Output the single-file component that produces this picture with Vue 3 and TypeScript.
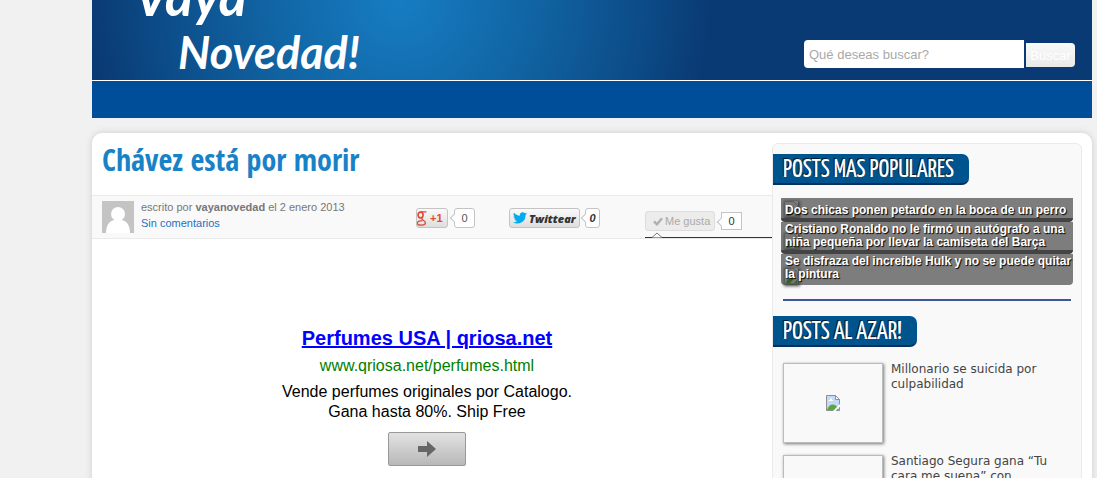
<script setup lang="ts">
import { ref } from 'vue'

interface Post {
  title: string
}

const query = ref('')

const popular: Post[] = [
  { title: 'Dos chicas ponen petardo en la boca de un perro' },
  { title: 'Cristiano Ronaldo no le firmó un autógrafo a una niña pequeña por llevar la camiseta del Barça' },
  { title: 'Se disfraza del increíble Hulk y no se puede quitar la pintura' },
]

const random: Post[] = [
  { title: 'Millonario se suicida por culpabilidad' },
  { title: 'Santiago Segura gana “Tu cara me suena” con' },
]
</script>

<template>
  <div class="page">
    <header class="banner">
      <a class="logo" href="#"><span class="logo-first">Vaya</span><span class="logo-second">Novedad!</span></a>
      <form class="search" @submit.prevent>
        <input v-model="query" type="text" aria-label="Buscar en el sitio" placeholder="Qué deseas buscar?" />
        <button type="submit">Buscar</button>
      </form>
    </header>
    <nav class="menu" aria-label="Principal"></nav>

    <div class="content">
      <main class="article">
        <h1>Chávez está por morir</h1>
        <div class="meta">
          <svg class="avatar" viewBox="0 0 32 32" aria-hidden="true">
            <rect width="32" height="32" fill="#c4c4c4" />
            <circle cx="16" cy="13" r="7" fill="#fff" />
            <path d="M4 32C4 24 8 19 13 19H19C24 19 28 24 28 32Z" fill="#fff" />
          </svg>
          <div class="byline">
            <div>escrito por <b>vayanovedad</b> el 2 enero 2013</div>
            <a href="#">Sin comentarios</a>
          </div>
          <div class="social google">
            <button type="button" class="plus">
              <svg width="10" height="16" viewBox="0 0 10 16" aria-hidden="true">
                <ellipse cx="3.600" cy="5" rx="2.500" ry="2.900" fill="none" stroke="#dd4b39" stroke-width="1.600" />
                <path d="M3.500 1.800H9.500M5.200 8C4.500 8.800 5 9.300 6.300 10.200 8.200 11.400 8.700 12.400 8.300 13.500 7.800 14.800 6 15.200 3.800 15.200 1.500 15.200.2 14.400.4 13 .6 11.400 2.500 10.600 5.400 10.600" fill="none" stroke="#dd4b39" stroke-width="1.300" />
              </svg>
              <span>+1</span>
            </button>
            <span class="count">0</span>
          </div>
          <div class="social twitter">
            <button type="button" class="tweet">
              <svg width="14" height="12" viewBox="0 0 24 20" aria-hidden="true">
                <path fill="#00aced" d="M24 2.400c-.9.400-1.800.7-2.800.8 1-.6 1.800-1.600 2.200-2.700-1 .6-2 1-3.100 1.200A4.900 4.900 0 0 0 11.900 6.100C7.800 5.900 4.200 4 1.700 1A4.900 4.900 0 0 0 3.200 7.500c-.8 0-1.600-.2-2.200-.6v.1c0 2.400 1.700 4.400 3.900 4.800-.7.200-1.500.2-2.200.1.600 2 2.400 3.400 4.600 3.400A9.900 9.900 0 0 1 0 17.300 14 14 0 0 0 21.500 5.500v-.6c1-.7 1.800-1.500 2.500-2.500z" />
              </svg>
              <span>Twittear</span>
            </button>
            <span class="count strong">0</span>
          </div>
          <div class="facebook">
            <div class="social">
              <button type="button" class="like">
                <svg width="10" height="9" viewBox="0 0 10 9" aria-hidden="true">
                  <path d="M1 4.500 4 7.300 9 1.200" fill="none" stroke="#b0b0b0" stroke-width="2.400" />
                </svg>
                <span>Me gusta</span>
              </button>
              <span class="count square">0</span>
            </div>
            <svg class="caret" width="12" height="6" viewBox="0 0 12 6" aria-hidden="true">
              <path d="M1 5.500 6 1 11 5.500" fill="#fff" stroke="#777" />
            </svg>
          </div>
        </div>

        <section class="advert">
          <a class="advert-title" href="#">Perfumes USA | qriosa.net</a>
          <a class="advert-url" href="#">www.qriosa.net/perfumes.html</a>
          <p>Vende perfumes originales por Catalogo.<br />Gana hasta 80%. Ship Free</p>
          <button type="button" class="go" aria-label="Visitar">
            <svg width="18" height="16" viewBox="0 0 18 16" aria-hidden="true">
              <path d="M0 5H9V0L18 8 9 16V11H0Z" fill="#666" />
            </svg>
          </button>
        </section>
      </main>

      <aside class="sidebar">
        <h2>POSTS MAS POPULARES</h2>
        <ul class="popular">
          <li v-for="post in popular" :key="post.title">
            <svg class="missing" width="14" height="16" viewBox="0 0 14 16" aria-hidden="true">
              <path d="M.5.500H9.500L13.500 4.500V15.500H.5Z" fill="#777" stroke="#5c5c5c" />
              <path d="M2 15C4 9 8 9 10 11L6 15ZM10 15 13 12V15Z" fill="#31651f" />
            </svg>
            <a href="#">{{ post.title }}</a>
          </li>
        </ul>
        <hr />
        <h2>POSTS AL AZAR!</h2>
        <ul class="random">
          <li v-for="post in random" :key="post.title">
            <a class="thumb" href="#" :aria-label="post.title">
              <svg width="14" height="16" viewBox="0 0 14 16" aria-hidden="true">
                <path d="M.5.500H9.500L13.500 4.500V15.500H.5Z" fill="#c5d8f7" stroke="#909090" />
                <path d="M9.500.500V4.500H13.500Z" fill="#fff" stroke="#909090" />
                <path d="M2.500 6V5H4V3.500H6V5H7V6Z" fill="#fff" />
                <path d="M1 15C3 9 8 8 11 12L13 15Z" fill="#56aa3c" />
                <path d="M7 16 14 9V11.500L9.500 16Z" fill="#fff" />
              </svg>
            </a>
            <a class="random-title" href="#">{{ post.title }}</a>
          </li>
        </ul>
      </aside>
    </div>
  </div>
</template>

<style>
html,
body {
  background: #f1f1f1;
}
body {
  margin: 0;
  overflow: hidden;
}
</style>

<style scoped>
.page {
  box-sizing: border-box;
  height: 100vh;
  overflow: hidden;
  padding: 0 5px 0 92px;
  font-family: "Liberation Sans", Arial, sans-serif;
}
a {
  text-decoration: none;
}
button {
  font-family: inherit;
  cursor: pointer;
}
svg {
  flex: none;
}
.banner {
  box-sizing: border-box;
  height: 80px;
  display: flex;
  align-items: flex-end;
  justify-content: space-between;
  overflow: hidden;
  padding: 0 17px 0 42px;
  background: radial-gradient(circle 310px at 308px 0, #167dc3 0%, #1166a5 40%, #0c4c88 78%, #0a3a73 100%);
}
.logo {
  display: flex;
  flex-direction: column;
  color: #fff;
  font: italic 700 45px/56px Lato, sans-serif;
}
.logo-first {
  font-size: 54px;
}
.logo-second {
  margin-left: 44px;
}
.search {
  display: flex;
  align-items: center;
  gap: 2px;
  margin-bottom: 12px;
}
.search input {
  box-sizing: border-box;
  width: 220px;
  height: 28px;
  padding: 0 5px;
  border: 0;
  border-radius: 4px 0 0 4px;
  background: #fff;
  font: 13px "Liberation Sans", Arial, sans-serif;
}
.search input::placeholder {
  color: #a9a9a9;
}
.search button {
  width: 49px;
  height: 24px;
  padding: 0;
  margin-top: 2px;
  border: 0;
  border-radius: 0 4px 4px 0;
  background: linear-gradient(#fafafa, #e9e9e9);
  color: #fff;
  font-size: 13px;
}
.menu {
  height: 37px;
  border-top: 1px solid #fff;
  background: #004d99;
}
.content {
  display: flex;
  align-items: flex-start;
  min-height: 400px;
  margin-top: 15px;
  border-radius: 10px;
  background: #fff;
  box-shadow: 0 0 7px #ccc;
}
.article {
  flex: 1;
  min-width: 0;
}
h1 {
  margin: 0;
  padding: 8px 10px 16px;
  color: #1982c7;
  font: 700 30px/38px "Open Sans Condensed", "Liberation Sans Narrow", "Open Sans", sans-serif;
}
.meta {
  box-sizing: border-box;
  height: 44px;
  display: flex;
  align-items: flex-start;
  padding: 5px 0 0 10px;
  border-top: 1px solid #eaeaea;
  border-bottom: 1px solid #eaeaea;
  background: #f9f9f9;
}
.avatar {
  width: 32px;
  height: 32px;
  margin-right: 7px;
}
.byline {
  width: 275px;
  color: #777;
  font-size: 11px;
  line-height: 16px;
  margin-top: -2px;
}
.byline a {
  color: #1c73c4;
}
.social {
  display: flex;
  align-items: center;
  gap: 6px;
}
.social button {
  box-sizing: border-box;
  height: 20px;
  display: flex;
  align-items: center;
  border: 1px solid #c4c4c4;
  border-radius: 3px;
  background: linear-gradient(#fafafa, #dedede);
  white-space: nowrap;
}
.google,
.twitter {
  margin-top: 7px;
}
.google {
  width: 93px;
}
.social .plus {
  width: 32px;
  padding: 0;
  gap: 3px;
  color: #dd4b39;
  font-size: 11px;
  font-weight: 700;
}
.count {
  position: relative;
  box-sizing: border-box;
  width: 21px;
  height: 20px;
  border: 1px solid #c4c4c4;
  border-radius: 3px;
  background: #fff;
  color: #555;
  font-size: 11px;
  line-height: 18px;
  text-align: center;
}
.count::before {
  content: "";
  position: absolute;
  left: -4px;
  top: 6px;
  width: 5px;
  height: 5px;
  border: 1px solid #c4c4c4;
  border-width: 0 0 1px 1px;
  background: #fff;
  transform: rotate(45deg);
}
.twitter {
  width: 136px;
  gap: 5px;
}
.social .tweet {
  width: 71px;
  padding: 0 3px;
  gap: 2px;
  color: #333;
  font: italic 800 11px "Open Sans", sans-serif;
}
.count.strong {
  width: 15px;
  color: #333;
  font-style: italic;
  font-weight: 700;
}
.facebook {
  position: relative;
  align-self: stretch;
  box-sizing: border-box;
  flex: 1;
  min-width: 100px;
  padding-top: 10px;
  border-bottom: 1px solid #333;
}
.social .like {
  width: 70px;
  padding: 0 0 0 7px;
  gap: 2px;
  border-color: #ddd;
  background: #ececec;
  color: #aaa;
  font-size: 11px;
}
.count.square {
  height: 18px;
  line-height: 16px;
  border-radius: 0;
  color: #333;
}
.caret {
  position: absolute;
  left: 6px;
  bottom: -1px;
}
.advert {
  display: flex;
  flex-direction: column;
  align-items: center;
  margin: 86px 10px 0 0;
  font-size: 16px;
  line-height: 20px;
  text-align: center;
}
.advert-title {
  color: #00f;
  font-size: 20px;
  font-weight: 700;
  line-height: 26px;
  text-decoration: underline;
}
.advert-url {
  margin-top: 5px;
  color: #008000;
}
.advert p {
  margin: 6px 0 10px;
}
.go {
  width: 78px;
  height: 34px;
  display: flex;
  align-items: center;
  justify-content: center;
  padding: 0;
  border: 1px solid #999;
  border-radius: 2px;
  background: linear-gradient(#e2e2e2, #b8b8b8);
}
.sidebar {
  box-sizing: border-box;
  width: 310px;
  min-height: 390px;
  margin: 10px 10px 0 0;
  padding-top: 10px;
  border: 1px solid #eaeaea;
  border-radius: 6px;
  background: #f9f9f9;
}
h2 {
  box-sizing: border-box;
  width: fit-content;
  height: 31px;
  margin: 0;
  padding: 0 15px 0 10px;
  border-bottom: 2px solid #0b2f5c;
  border-radius: 0 7px 7px 0;
  background: #00548e;
  color: #fff;
  font: 400 25px/34px "Yanone Kaffeesatz", "Liberation Sans Narrow", "Open Sans", sans-serif;
  text-shadow: -1px -1px 0 #001a33;
  white-space: nowrap;
}
ul {
  margin: 0;
  padding: 0;
  list-style: none;
}
.popular {
  margin: 13px 8px 0;
}
.popular li {
  position: relative;
  padding: 1px 0 1px 4px;
  border-bottom: 4px solid #444;
  border-radius: 0 0 4px 4px;
  background: #7d7d7d;
  font-size: 12px;
  font-weight: 700;
  line-height: 13px;
}
.popular li:first-child {
  padding-top: 6px;
}
.popular li:last-child {
  padding-bottom: 4px;
  border-bottom: 0;
}
.popular a {
  position: relative;
  display: block;
  margin-right: -3px;
  color: #fff;
  text-shadow: 1px 1px 1px #000;
}
.missing {
  position: absolute;
  left: 3px;
  bottom: 1px;
  box-shadow: 1px 1px 3px 1px #444;
}
hr {
  height: 2px;
  margin: 14px 10px 15px;
  border: 0;
  background: #3b5998;
}
.random {
  padding: 16px 10px 0;
}
.random li {
  display: flex;
  align-items: flex-start;
  gap: 8px;
  margin-bottom: 12px;
}
.thumb {
  box-sizing: border-box;
  width: 100px;
  height: 80px;
  flex: none;
  display: flex;
  align-items: center;
  justify-content: center;
  border: 1px solid #bbb;
  box-shadow: 1px 1px 3px #777;
  background: #f9f9f9;
}
.random-title {
  width: 160px;
  margin-top: -1px;
  color: #444;
  font: 12px/15px "DejaVu Sans", Verdana, sans-serif;
}
</style>
